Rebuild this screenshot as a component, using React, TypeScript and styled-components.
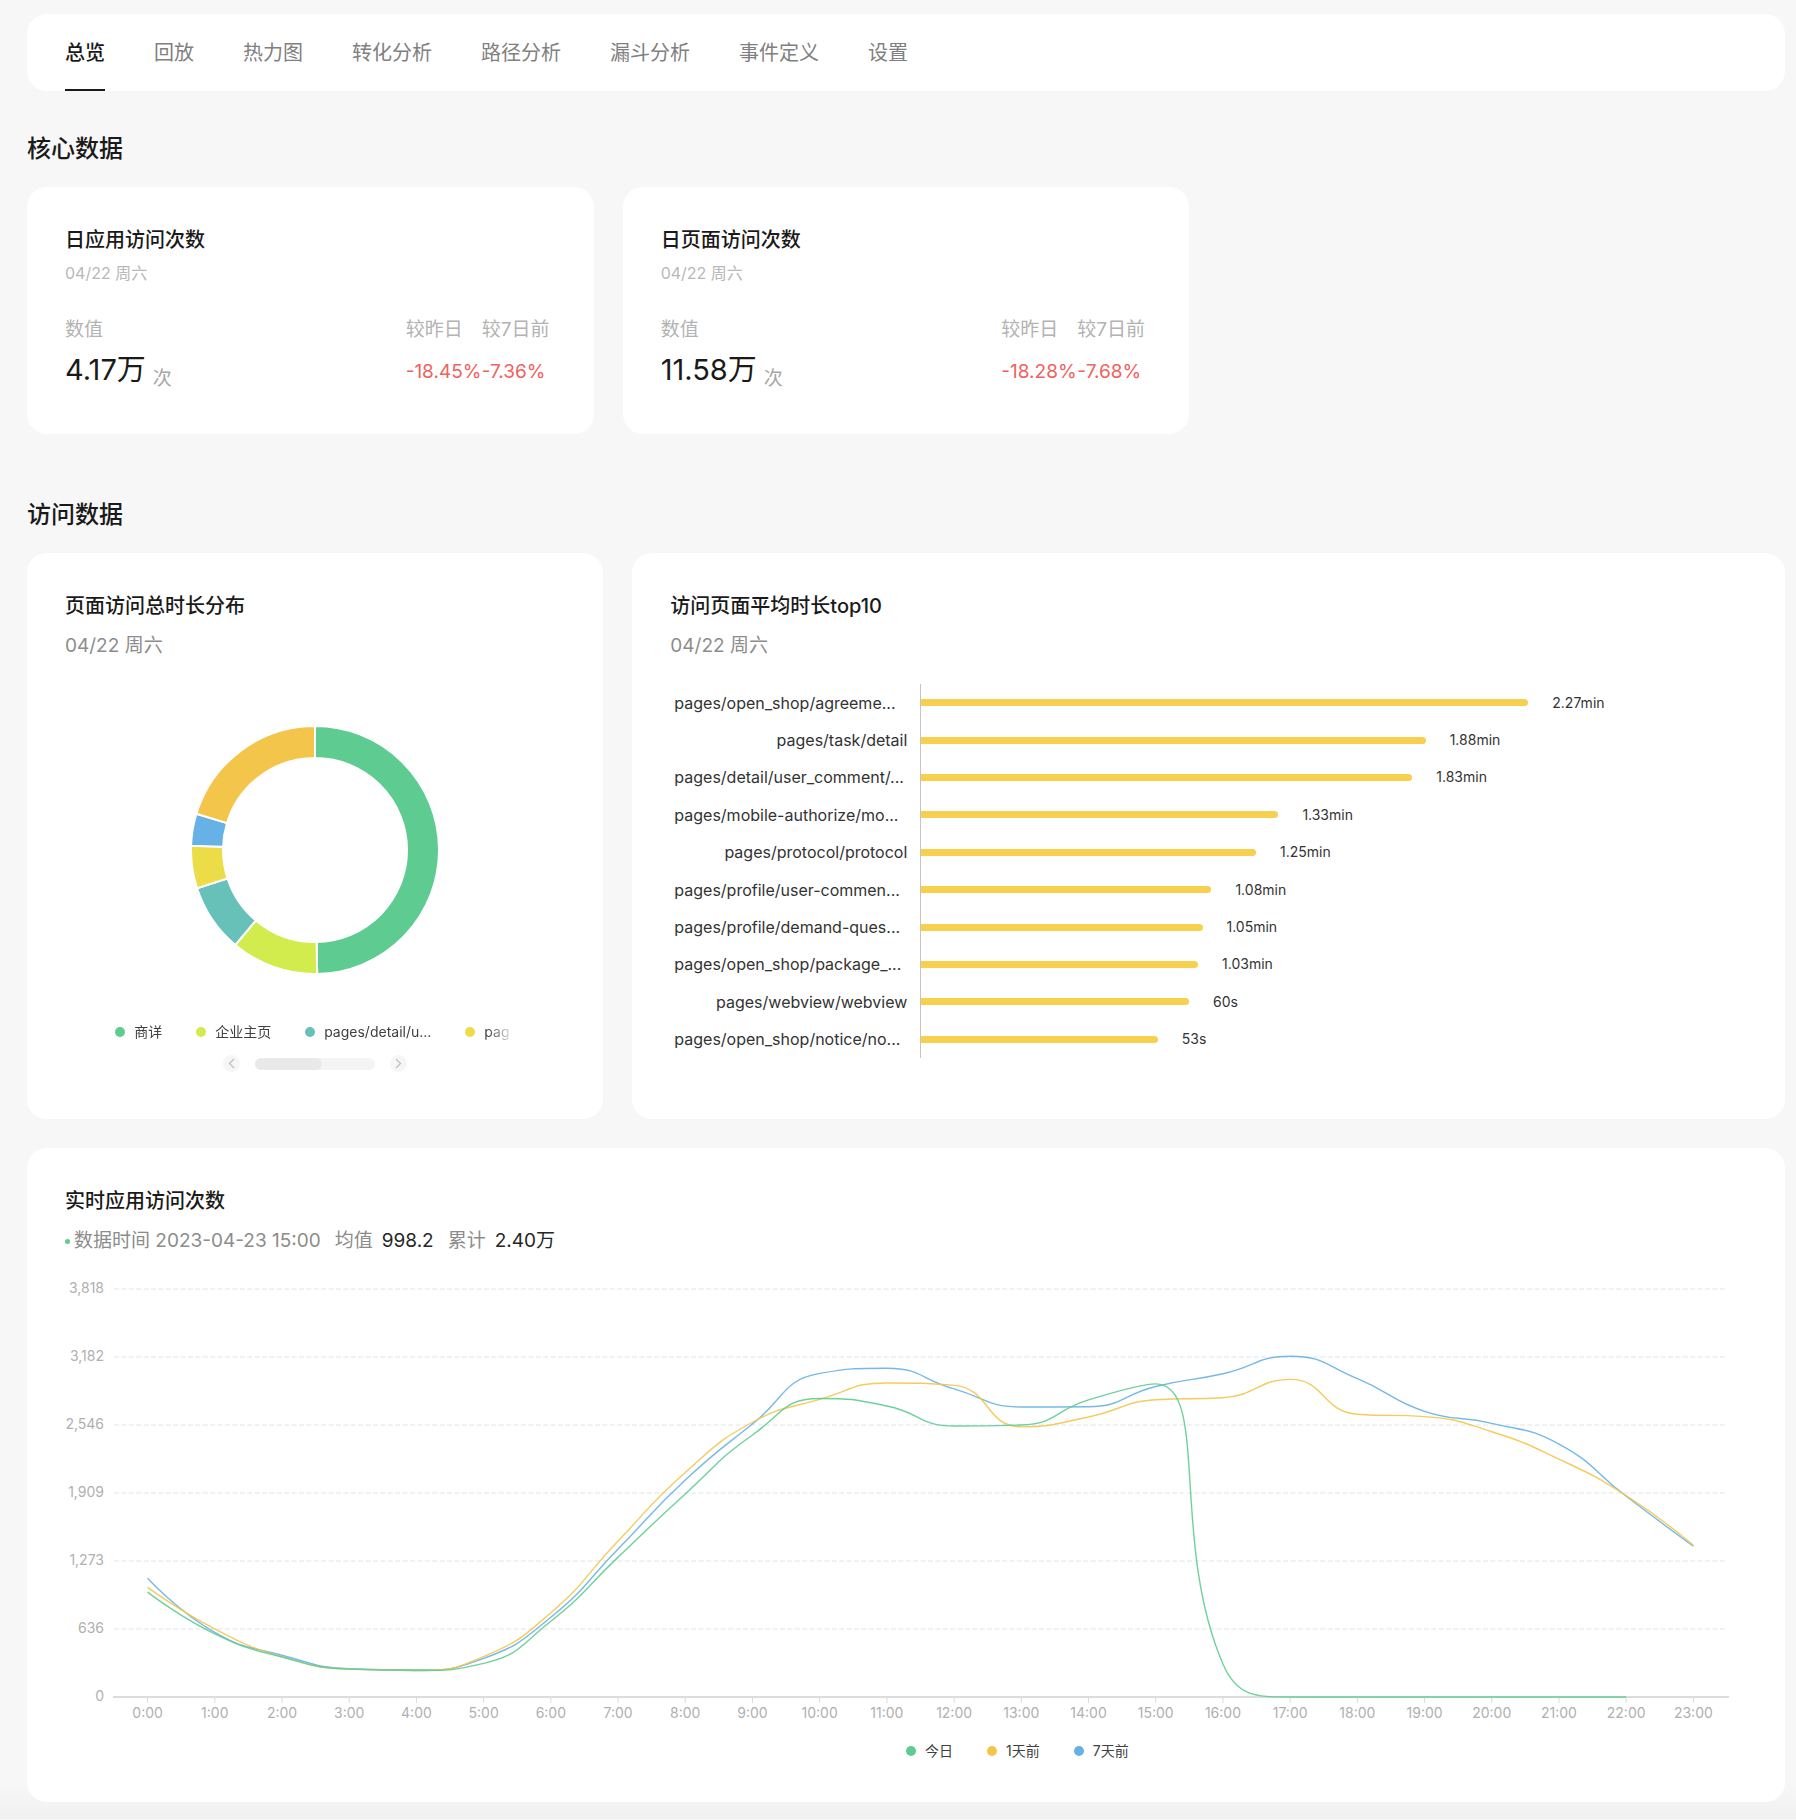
import React, { useState } from "react";
import styled, { createGlobalStyle } from "styled-components";

const GlobalStyle = createGlobalStyle`
  *, *::before, *::after { box-sizing: border-box; }
  body {
    margin: 0;
    background: #f7f7f7;
    font-family: Inter, "Noto Sans CJK SC", sans-serif;
    color: #1a1a1a;
  }
  h2, h3, p, ul, dl, dd, dt { margin: 0; padding: 0; }
  ul { list-style: none; }
  button { font: inherit; border: 0; padding: 0; background: none; cursor: pointer; }
`;

const Page = styled.main`
  padding: 14px 11px 17px 27px;
  background: linear-gradient(#f7f7f7 calc(100% - 36px), #f1f1f1);
`;

const TabBar = styled.nav`
  display: flex;
  gap: 49px;
  height: 77px;
  padding: 0 38px;
  background: #fff;
  border-radius: 20px;
`;

const Tab = styled.button<{ $active: boolean }>`
  padding-top: 2px;
  border-bottom: 2px solid ${(p) => (p.$active ? "#1a1a1a" : "transparent")};
  font-size: 20px;
  font-weight: ${(p) => (p.$active ? 500 : 400)};
  line-height: 28px;
  color: ${(p) => (p.$active ? "#1a1a1a" : "#808080")};
  white-space: nowrap;
`;

const SectionTitle = styled.h2<{ $gap: number }>`
  margin: ${(p) => p.$gap}px 0 22px;
  font-size: 24px;
  font-weight: 500;
  line-height: 32px;
`;

const MetricGrid = styled.div`
  display: grid;
  grid-template-columns: repeat(3, 1fr);
  gap: 29px;
`;

const VisitGrid = styled.div`
  display: grid;
  grid-template-columns: 1fr 2fr;
  gap: 29px;
  margin-bottom: 29px;
`;

const Card = styled.section`
  min-width: 0;
  padding: 39px 38px 38px;
  background: #fff;
  border-radius: 20px;
`;

const CardTitle = styled.h3`
  font-size: 20px;
  font-weight: 500;
  line-height: 28px;
`;

const CardDate = styled.p<{ $small?: boolean }>`
  margin-top: ${(p) => (p.$small ? 7 : 12)}px;
  font-size: ${(p) => (p.$small ? 16 : 19)}px;
  line-height: ${(p) => (p.$small ? 24 : 28)}px;
  color: ${(p) => (p.$small ? "#b8b8b8" : "#8c8c8c")};
`;

const MetricRow = styled.dl`
  display: grid;
  grid-template-columns: 1fr 76px 74px;
  grid-template-rows: 28px 40px;
  grid-auto-flow: column;
  row-gap: 8px;
  margin: 31px 0 4px;
  white-space: nowrap;
`;

const MetricLabel = styled.dt`
  font-size: 19px;
  line-height: 28px;
  color: #b3b3b3;
`;

const MetricValue = styled.dd`
  display: flex;
  align-items: flex-start;
  gap: 7px;
  font-size: 29px;
  line-height: 36px;
`;

const MetricUnit = styled.span`
  margin-top: 13px;
  font-size: 19px;
  line-height: 28px;
  color: #a6a6a6;
`;

const MetricDelta = styled.dd`
  font-size: 19px;
  line-height: 40px;
  color: #f0625d;
`;

const Donut = styled.svg`
  display: block;
  margin: 65px auto 47px;
`;

const DonutLegend = styled.ul`
  display: flex;
  gap: 34px;
  max-width: 400px;
  margin: 0 auto;
  mask-image: linear-gradient(90deg, #000 93%, transparent);
`;

const LegendItem = styled.li`
  display: flex;
  flex: none;
  align-items: center;
  gap: 9px;
  font-size: 14px;
  line-height: 20px;
  color: #404040;
  white-space: nowrap;
`;

const Dot = styled.i<{ $color: string; $size: number }>`
  width: ${(p) => p.$size}px;
  height: ${(p) => p.$size}px;
  border-radius: 50%;
  background: ${(p) => p.$color};
`;

const Pager = styled.div`
  display: flex;
  align-items: center;
  justify-content: center;
  gap: 15px;
  margin-top: 13px;
`;

const PagerButton = styled.button`
  display: grid;
  place-items: center;
  width: 17px;
  height: 17px;
  border-radius: 50%;
  background: #f6f6f6;
  color: #bfbfbf;
`;

const Track = styled.div`
  width: 120px;
  height: 12px;
  border-radius: 6px;
  background: #f4f4f4;
`;

const Thumb = styled.div`
  width: 67px;
  height: 12px;
  border-radius: 6px;
  background: #e9e9e9;
`;

const BarChart = styled.ul`
  display: grid;
  grid-auto-rows: 1fr;
  height: 374px;
  margin: 24px 0 23px;
`;

const BarRow = styled.li`
  display: grid;
  grid-template-columns: 237px 1fr;
  column-gap: 13px;
`;

const BarName = styled.span<{ $cut: boolean }>`
  display: flex;
  align-items: center;
  justify-content: ${(p) => (p.$cut ? "flex-start" : "flex-end")};
  padding-left: 4px;
  font-size: 16px;
  line-height: 24px;
  color: #333;
  white-space: nowrap;
`;

const BarPlot = styled.div`
  display: flex;
  align-items: center;
  gap: 24px;
  border-left: 1px solid #c4c4c4;
  font-size: 14px;
  line-height: 20px;
  color: #333;
`;

const Bar = styled.div`
  height: 7px;
  border-radius: 0 4px 4px 0;
  background: #f8d04f;
`;

const Summary = styled.p`
  display: flex;
  align-items: center;
  margin-top: 12px;
  font-size: 19px;
  line-height: 28px;
  color: #8c8c8c;
`;

const SummaryText = styled.span`
  margin: 0 14px 0 4px;
`;

const SummaryPair = styled.span`
  display: flex;
  gap: 9px;
  margin-right: 14px;
`;

const Strong = styled.b`
  font-weight: 400;
  color: #262626;
`;

const LineSvg = styled.svg`
  display: block;
  width: 100%;
  height: auto;
  margin: 15px 0 11px;
  font-size: 14px;
  overflow: visible;
`;

const LineLegend = styled.ul`
  display: flex;
  gap: 34px;
  margin: 0 0 3px 50%;
`;

const GREEN = "#5ecc91";
const ORANGE = "#f3c54b";
const BLUE = "#66b1e6";

const tabs = ["总览", "回放", "热力图", "转化分析", "路径分析", "漏斗分析", "事件定义", "设置"];

const metrics = [
  { title: "日应用访问次数", value: "4.17万", day: "-18.45%", week: "-7.36%" },
  { title: "日页面访问次数", value: "11.58万", day: "-18.28%", week: "-7.68%" },
];

const slices = [
  { color: GREEN, end: 179 },
  { color: "#d2eb4d", end: 220 },
  { color: "#68c1b8", end: 252 },
  { color: "#ebdc48", end: 272 },
  { color: BLUE, end: 287 },
  { color: ORANGE, end: 360 },
];

const donutLegend = [
  { color: GREEN, name: "商详" },
  { color: "#d2eb4d", name: "企业主页" },
  { color: "#68c1b8", name: "pages/detail/u..." },
  { color: "#ebdc48", name: "pag" },
];

const AXIS_SECONDS = 185;
const bars = [
  { name: "pages/open_shop/agreeme...", seconds: 136, label: "2.27min" },
  { name: "pages/task/detail", seconds: 113, label: "1.88min" },
  { name: "pages/detail/user_comment/...", seconds: 110, label: "1.83min" },
  { name: "pages/mobile-authorize/mo...", seconds: 80, label: "1.33min" },
  { name: "pages/protocol/protocol", seconds: 75, label: "1.25min" },
  { name: "pages/profile/user-commen...", seconds: 65, label: "1.08min" },
  { name: "pages/profile/demand-ques...", seconds: 63, label: "1.05min" },
  { name: "pages/open_shop/package_...", seconds: 62, label: "1.03min" },
  { name: "pages/webview/webview", seconds: 60, label: "60s" },
  { name: "pages/open_shop/notice/no...", seconds: 53, label: "53s" },
];

const series = [
  {
    name: "今日",
    color: GREEN,
    data: [981, 591, 374, 261, 248, 315, 709, 1309, 1900, 2452, 2794, 2723, 2536, 2545, 2780, 2930, 309, 0, 0, 0, 0, 0, 0],
  },
  {
    name: "1天前",
    color: ORANGE,
    data: [1026, 637, 378, 261, 248, 378, 788, 1460, 2101, 2571, 2785, 2939, 2916, 2528, 2620, 2781, 2801, 2972, 2646, 2624, 2482, 2226, 1884, 1420],
  },
  {
    name: "7天前",
    color: BLUE,
    data: [1111, 605, 391, 265, 252, 361, 746, 1384, 2031, 2554, 3028, 3077, 2883, 2714, 2716, 2906, 3025, 3189, 2979, 2673, 2561, 2367, 1878, 1411],
  },
];

const yLabels = ["0", "636", "1,273", "1,909", "2,546", "3,182", "3,818"];

const CHART = { width: 1682, height: 460, left: 49, right: 1662, top: 19, bottom: 427, max: 3818 };
const BAND = (CHART.right - CHART.left) / 24;
const hourX = (hour: number) => CHART.left + BAND * (hour + 0.5);
const valueY = (value: number) =>
  CHART.bottom - (value / CHART.max) * (CHART.bottom - CHART.top);

const clamp = (v: number, a: number, b: number) =>
  Math.max(Math.min(a, b), Math.min(Math.max(a, b), v));

/* Smooth curve whose control points never leave the range of their two neighbours. */
function smoothPath(data: number[]) {
  const pts = data.map((v, i) => [hourX(i), valueY(v)]);
  let d = `M${pts[0][0]},${pts[0][1]}`;
  let out = pts[0];
  for (let i = 1; i < pts.length; i++) {
    const [px, py] = pts[i - 1];
    const [x, y] = pts[i];
    let inn = [x, y];
    let nextOut = [x, y];
    if (i < pts.length - 1) {
      const [nx, ny] = pts[i + 1];
      const prevLen = Math.hypot(x - px, y - py);
      const nextLen = Math.hypot(nx - x, ny - y);
      const k = (0.5 * nextLen) / (nextLen + prevLen);
      const ox = clamp(x + (nx - px) * k, x, nx);
      const oy = clamp(y + (ny - py) * k, y, ny);
      const back = prevLen / nextLen;
      inn = [clamp(x - (ox - x) * back, px, x), clamp(y - (oy - y) * back, py, y)];
      nextOut = [x + (x - inn[0]) / back, y + (y - inn[1]) / back];
    }
    d += `C${out[0]},${out[1]} ${inn[0]},${inn[1]} ${x},${y}`;
    out = nextOut;
  }
  return d;
}

function ringSlice(from: number, to: number) {
  const at = (deg: number, r: number) => {
    const a = (deg * Math.PI) / 180;
    return `${125 + r * Math.sin(a)},${125 - r * Math.cos(a)}`;
  };
  const large = to - from > 180 ? 1 : 0;
  return `M${at(from, 124)}A124,124 0 ${large} 1 ${at(to, 124)}L${at(to, 92)}A92,92 0 ${large} 0 ${at(from, 92)}Z`;
}

function Chevron({ flip = false }: { flip?: boolean }) {
  return (
    <svg width="7" height="11" viewBox="0 0 7 11" fill="none" stroke="currentColor" strokeWidth="1.3">
      <path d={flip ? "M1 1l4.5 4.5L1 10" : "M6 1L1.5 5.5 6 10"} />
    </svg>
  );
}

function LineChart() {
  return (
    <LineSvg viewBox={`0 0 ${CHART.width} ${CHART.height}`} role="img" aria-label="实时应用访问次数">
      {yLabels.map((label, i) => {
        const y = valueY((CHART.max / 6) * i);
        return (
          <g key={label}>
            {i > 0 && (
              <line x1={CHART.left} x2={CHART.right} y1={y} y2={y} stroke="#dfe3ef" strokeWidth="1.2" strokeDasharray="5 2.4" />
            )}
            <text x="39" y={y + 4} textAnchor="end" fill="#b0b0b0">{label}</text>
          </g>
        );
      })}
      <line x1={CHART.left - 1} x2={CHART.right + 2} y1={CHART.bottom} y2={CHART.bottom} stroke="#dcdcdc" strokeWidth="2" />
      {Array.from({ length: 24 }, (_, h) => (
        <g key={h}>
          <line x1={hourX(h)} x2={hourX(h)} y1={CHART.bottom} y2={CHART.bottom + 6} stroke="#dcdcdc" />
          <text x={hourX(h)} y={CHART.bottom + 21} textAnchor="middle" fill="#b0b0b0">{`${h}:00`}</text>
        </g>
      ))}
      {[...series].reverse().map((s) => (
        <path key={s.name} d={smoothPath(s.data)} fill="none" stroke={s.color} strokeOpacity="0.9" strokeWidth="1.4" strokeLinejoin="round" />
      ))}
    </LineSvg>
  );
}

export default function App() {
  const [active, setActive] = useState(tabs[0]);
  return (
    <>
      <GlobalStyle />
      <Page>
        <TabBar>
          {tabs.map((t) => (
            <Tab key={t} $active={t === active} onClick={() => setActive(t)}>{t}</Tab>
          ))}
        </TabBar>

        <SectionTitle $gap={42}>核心数据</SectionTitle>
        <MetricGrid>
          {metrics.map((m) => (
            <Card key={m.title}>
              <CardTitle>{m.title}</CardTitle>
              <CardDate $small>04/22 周六</CardDate>
              <MetricRow>
                <MetricLabel>数值</MetricLabel>
                <MetricValue>{m.value}<MetricUnit>次</MetricUnit></MetricValue>
                <MetricLabel>较昨日</MetricLabel>
                <MetricDelta>{m.day}</MetricDelta>
                <MetricLabel>较7日前</MetricLabel>
                <MetricDelta>{m.week}</MetricDelta>
              </MetricRow>
            </Card>
          ))}
        </MetricGrid>

        <SectionTitle $gap={65}>访问数据</SectionTitle>
        <VisitGrid>
          <Card>
            <CardTitle>页面访问总时长分布</CardTitle>
            <CardDate>04/22 周六</CardDate>
            <Donut width="250" height="250" viewBox="0 0 250 250" role="img" aria-label="页面访问总时长分布">
              {slices.map((s, i) => (
                <path key={s.color} d={ringSlice(i ? slices[i - 1].end : 0, s.end)} fill={s.color} stroke="#fff" strokeWidth="2" />
              ))}
            </Donut>
            <DonutLegend>
              {donutLegend.map((l) => (
                <LegendItem key={l.color}><Dot $color={l.color} $size={10} />{l.name}</LegendItem>
              ))}
            </DonutLegend>
            <Pager>
              <PagerButton aria-label="上一页"><Chevron /></PagerButton>
              <Track><Thumb /></Track>
              <PagerButton aria-label="下一页"><Chevron flip /></PagerButton>
            </Pager>
          </Card>

          <Card>
            <CardTitle>访问页面平均时长top10</CardTitle>
            <CardDate>04/22 周六</CardDate>
            <BarChart>
              {bars.map((b) => (
                <BarRow key={b.name}>
                  <BarName $cut={b.name.endsWith("...")}>{b.name}</BarName>
                  <BarPlot>
                    <Bar style={{ width: `${(b.seconds / AXIS_SECONDS) * 100}%` }} />
                    {b.label}
                  </BarPlot>
                </BarRow>
              ))}
            </BarChart>
          </Card>
        </VisitGrid>

        <Card>
          <CardTitle>实时应用访问次数</CardTitle>
          <Summary>
            <Dot $color={GREEN} $size={5} />
            <SummaryText>数据时间 2023-04-23 15:00</SummaryText>
            <SummaryPair>均值<Strong>998.2</Strong></SummaryPair>
            <SummaryPair>累计<Strong>2.40万</Strong></SummaryPair>
          </Summary>
          <LineChart />
          <LineLegend>
            {series.map((s) => (
              <LegendItem key={s.name}><Dot $color={s.color} $size={10} />{s.name}</LegendItem>
            ))}
          </LineLegend>
        </Card>
      </Page>
    </>
  );
}
